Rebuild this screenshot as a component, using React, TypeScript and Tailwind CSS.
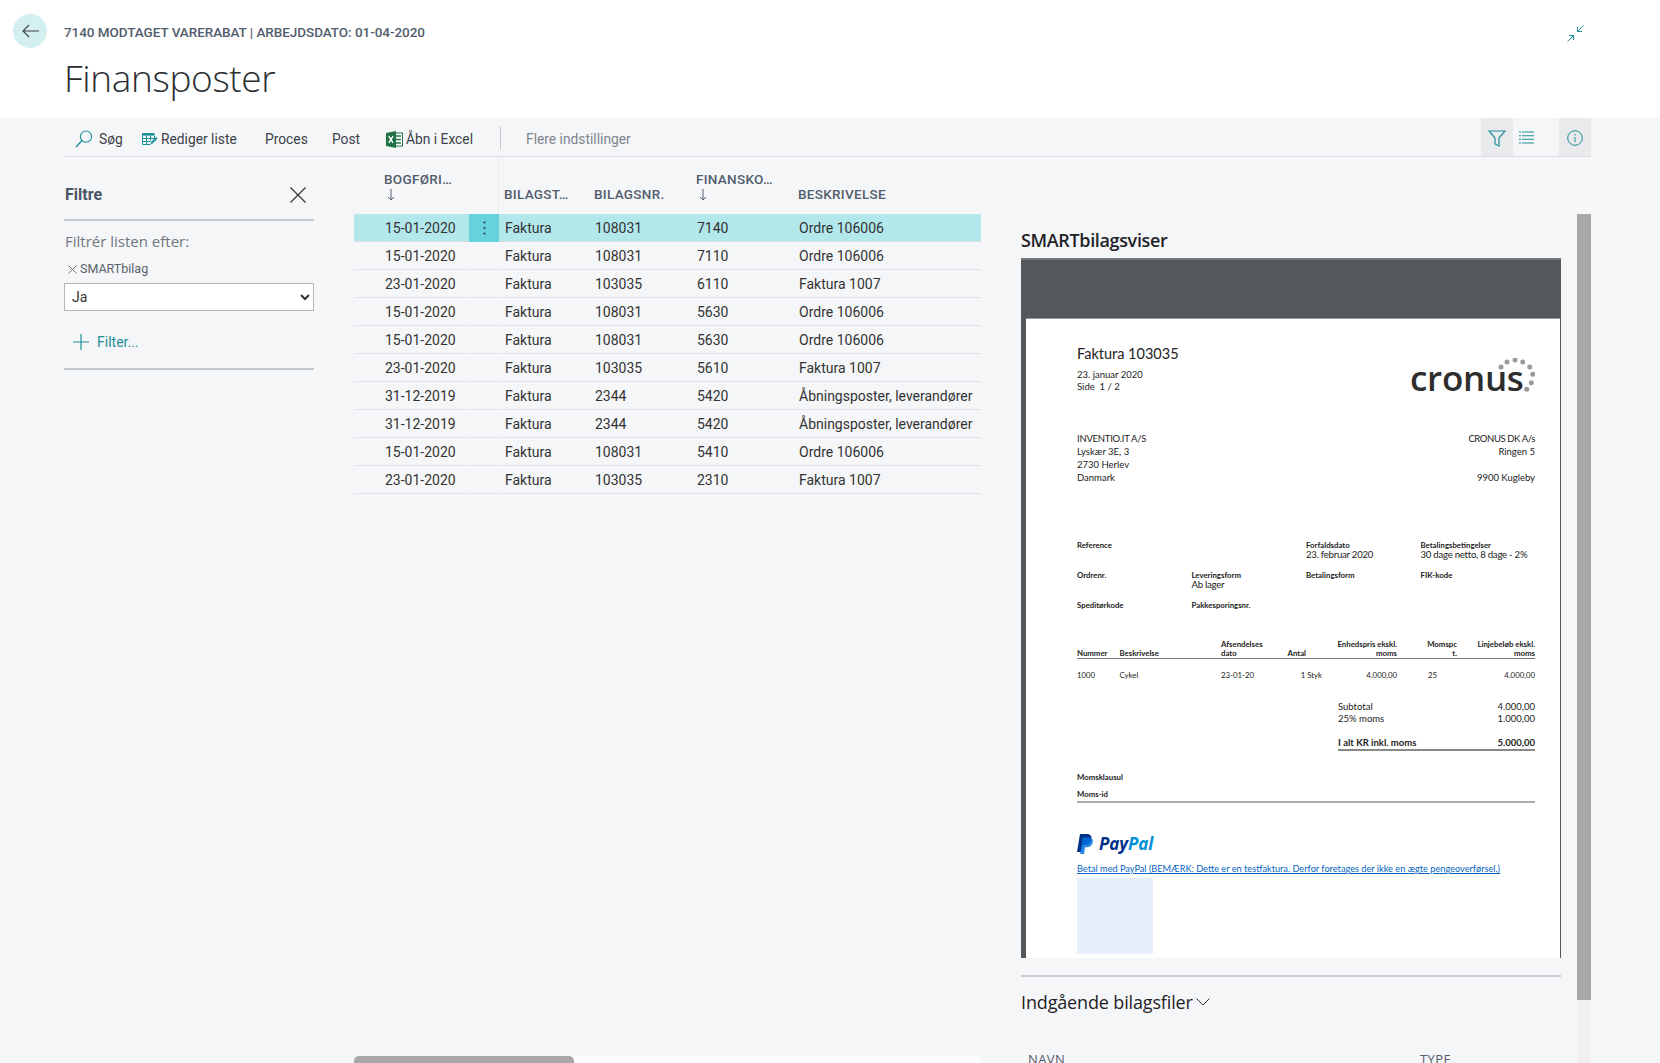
import React from "react";

const rows = [
  ["15-01-2020", "108031", "7140", "Ordre 106006"],
  ["15-01-2020", "108031", "7110", "Ordre 106006"],
  ["23-01-2020", "103035", "6110", "Faktura 1007"],
  ["15-01-2020", "108031", "5630", "Ordre 106006"],
  ["15-01-2020", "108031", "5630", "Ordre 106006"],
  ["23-01-2020", "103035", "5610", "Faktura 1007"],
  ["31-12-2019", "2344", "5420", "Åbningsposter, leverandører"],
  ["31-12-2019", "2344", "5420", "Åbningsposter, leverandører"],
  ["15-01-2020", "108031", "5410", "Ordre 106006"],
  ["23-01-2020", "103035", "2310", "Faktura 1007"],
];

const teal = "#1f8f99";
const roboto = { fontFamily: "Roboto, sans-serif" };

function Search() {
  return (
    <svg width="18" height="18" viewBox="0 0 18 18" fill="none" stroke={teal} strokeWidth="1.1">
      <circle cx="11" cy="6.6" r="5.6" />
      <path d="M7 10.6 1 17" strokeWidth="1.4" />
    </svg>
  );
}
function EditList() {
  return (
    <svg width="16" height="15" viewBox="0 0 16 15" fill="none">
      <rect x="0.5" y="1" width="12" height="2.6" fill={teal} />
      <path d="M0.5 1v11.5h8M4.5 3.5v9M8.5 3.5v5M12.5 3.5v3M.5 6.5h12M.5 9.5h8" stroke={teal} strokeWidth="1" />
      <path d="M8.5 12.5 9 10l5-5 1.6 1.6-5 5z" fill={teal} />
    </svg>
  );
}
function Excel() {
  return (
    <svg width="17" height="17" viewBox="0 0 17 17">
      <rect x="7" y="2" width="9.5" height="13" fill="#fff" stroke="#217346" />
      <path d="M10 5h5M10 8.5h5M10 12h5" stroke="#217346" strokeWidth="1.6" />
      <path d="M0 2 10 0v17L0 15z" fill="#217346" />
      <path d="M2.8 5.2 7 11.8M7 5.2 2.8 11.8" stroke="#fff" strokeWidth="1.4" />
    </svg>
  );
}

function Toolbar() {
  return (
    <div className="ml-[64px] flex h-[39px] w-[1527px] items-center border-b border-[#dcdfe3] text-[13.8px] text-[#3d4248]" style={roboto}>
      <div className="mt-[4px] flex items-center">
        <span className="ml-[11px] flex h-[18px] items-center">
          <Search />
        </span>
        <span className="ml-[6px] w-[43px]">Søg</span>
        <EditList />
        <span className="ml-[3px] w-[104px]">Rediger liste</span>
        <span className="w-[67px]">Proces</span>
        <span className="w-[54px]">Post</span>
        <Excel />
        <span className="ml-[3px] w-[94px]">Åbn i Excel</span>
        <span className="mt-[-4px] h-[23px] w-px bg-[#c6cace]" />
        <span className="ml-[25px] text-[#7f858d]">Flere indstillinger</span>
      </div>
      <span className="ml-auto flex h-[38px] w-[32px] items-center justify-center bg-[#e8eaec] pt-[1px]">
        <svg width="18" height="18" viewBox="0 0 18 18" fill="none" stroke={teal} strokeWidth="1.2">
          <path d="M1 2h16l-6 7v8l-4-2V9z" />
        </svg>
      </span>
      <span className="flex w-[27px] items-center justify-center pt-[1px]">
        <svg width="15" height="13" viewBox="0 0 15 13" fill="none" stroke={teal} strokeWidth="1.1">
          <path d="M3 1h12M3 4.7h12M3 8.3h12M3 12h12" />
          <path d="M0 1h2M0 4.7h2M0 8.3h2M0 12h2" />
        </svg>
      </span>
      <span className="ml-[19px] flex h-[38px] w-[32px] items-center justify-center bg-[#e8eaec] pt-[1px]">
        <svg width="16" height="16" viewBox="0 0 16 16" fill="none" stroke={teal} strokeWidth="1">
          <circle cx="8" cy="8" r="7.3" />
          <path d="M8 7v5M8 4v1.4" />
        </svg>
      </span>
    </div>
  );
}

function FilterPane() {
  return (
    <div className="ml-[64px] w-[250px] shrink-0 pt-[26px]">
      <div className="flex h-[24px] items-center justify-between pl-px pr-[8px] text-[16px] font-bold text-[#4b5563]" style={roboto}>
        <span>Filtre</span>
        <svg width="16" height="16" viewBox="0 0 16 16" fill="none" stroke="#333" strokeWidth="1.2">
          <path d="M0.5 0.5 15.500 15.500M15.500 0.500 0.500 15.500" />
        </svg>
      </div>
      <div className="mt-[12px] border-t-2 border-[#c4c8cd]" />
      <div className="ml-px mt-[10px] h-[20px] text-[15px] leading-[20px] text-[#6f7680]">Filtrér listen efter:</div>
      <div className="mt-[10px] flex h-[16px] items-center pl-[4px] text-[12.5px] text-[#5b626b]" style={roboto}>
        <svg width="9" height="9" viewBox="0 0 9 9" fill="none" stroke="#666" strokeWidth="0.9">
          <path d="M0.5 0.5 8.500 8.500M8.500 0.500 0.500 8.500" />
        </svg>
        <span className="ml-[3px]">SMARTbilag</span>
      </div>
      <select
        defaultValue="Ja"
        style={roboto}
        className="mt-[6px] block h-[28px] w-[250px] border border-[#b4b7bb] bg-white pl-[3px] text-[14px] text-[#333]"
      >
        <option>Ja</option>
        <option>Nej</option>
      </select>
      <div className="ml-[9px] mt-[21px] flex h-[20px] items-center text-[14px] text-[#1f8f99]" style={roboto}>
        <svg width="16" height="16" viewBox="0 0 16 16" fill="none" stroke={teal} strokeWidth="1.2">
          <path d="M8 0v16M0 8h16" />
        </svg>
        <span className="ml-[8px]">Filter...</span>
      </div>
      <div className="mt-[16px] border-t-2 border-[#c4c8cd]" />
    </div>
  );
}

function HeadCell({ a, sorted }: { a: string; sorted?: boolean }) {
  return (
    <div className="flex h-[57px] flex-col justify-end pb-[12px] text-[13.5px] leading-[16px] tracking-[0.3px] text-[#525d6d]" style={roboto}>
      <span className="font-medium">{a}</span>
      {sorted && (
        <svg className="mb-px ml-[3px] mt-[2px]" width="8" height="12" viewBox="0 0 8 12" fill="none" stroke="#525d6d">
          <path d="M4 0v11M1 8l3 3 3-3" />
        </svg>
      )}
    </div>
  );
}

const gridCols = "grid-cols-[115px_30px_90px_102px_102px_188px]";

function DataTable() {
  return (
    <div className="ml-[40px] flex h-[906px] w-[627px] shrink-0 flex-col">
      <div className={`grid ${gridCols}`}>
        <div className="pl-[30px]"><HeadCell a="BOGFØRI…" sorted /></div>
        <div className="border-r border-[#eceef0]" />
        <div className="pl-[5px]"><HeadCell a="BILAGST…" /></div>
        <div className="pl-[5px]"><HeadCell a="BILAGSNR." /></div>
        <div className="pl-[5px]"><HeadCell a="FINANSKO…" sorted /></div>
        <div className="pl-[5px]"><HeadCell a="BESKRIVELSE" /></div>
      </div>
      {rows.map((r, i) => {
        const sel = i === 0;
        const cell = `flex h-[28px] items-center pl-[6px] pt-[2px] border-b ${sel ? "border-[#d8dce0]" : "border-[#dfe2e8]"}`;
        return (
          <div
            key={i}
            style={roboto}
            className={`grid ${gridCols} text-[14px] text-[#333] ${sel ? "bg-[#b2e7ec]" : ""}`}
          >
            <div className={`${cell} pl-[31px]`}>{r[0]}</div>
            {sel ? (
              <div className="flex h-[28px] items-center justify-center bg-[#66d2dc]">
                <svg width="3" height="14" viewBox="0 0 3 14" fill="#2b3a3f">
                  <circle cx="1.5" cy="1.5" r="1.1" />
                  <circle cx="1.5" cy="7" r="1.1" />
                  <circle cx="1.5" cy="12.5" r="1.1" />
                </svg>
              </div>
            ) : (
              <div className={`${cell} mx-px`} />
            )}
            <div className={cell}>Faktura</div>
            <div className={cell}>{r[1]}</div>
            <div className={cell}>{r[2]}</div>
            <div className={`${cell} whitespace-nowrap`}>{r[3]}</div>
          </div>
        );
      })}
      <div className="mt-auto h-[7px] rounded-t-[5px] bg-white">
        <div className="h-[7px] w-[220px] rounded-t-[5px] bg-[#a8a8a8]" />
      </div>
    </div>
  );
}

function Label({ children, className = "" }: { children?: React.ReactNode; className?: string }) {
  return <div className={`h-[10px] text-[7.8px] font-bold leading-[10px] ${className}`}>{children}</div>;
}
function Value({ children }: { children: React.ReactNode }) {
  return <div className="h-[10px] whitespace-nowrap text-[9.6px] leading-[10px] tracking-[-0.25px]">{children}</div>;
}

const invCols = "grid-cols-[42.5px_101.5px_66.5px_34.5px_75px_60px_78px]";

function CronusLogo() {
  const dots = [[4, 9], [10, 4], [18, 2], [25.7, 4], [32.7, 9], [35.7, 16.3], [34.3, 24.7], [29.7, 31.3]];
  return (
    <div className="relative mt-[14px] h-[40px] w-[125px]">
      <span
        className="absolute bottom-[-7px] left-0 text-[35px] font-semibold leading-[40px] tracking-[-0.3px] text-[#2e2e2e]"
        style={{ fontFamily: '"Open Sans", sans-serif' }}
      >
        cronus
      </span>
      <svg className="absolute right-0 top-[7px]" width="38" height="36" viewBox="0 0 38 36" fill="#9a9a9a">
        {dots.map((d, i) => (
          <circle key={i} cx={d[0]} cy={d[1]} r="2.5" />
        ))}
      </svg>
    </div>
  );
}

function PayPalLogo() {
  return (
    <div className="mt-[31px] flex h-[20px] items-center">
      <svg width="16" height="20" viewBox="0 0 16 20">
        <path d="M3 0h6.5C13 0 15 2 14.5 5c-.5 4-3.500 6-7 6H5.300L4 18H0z" fill="#003087" />
        <path d="M5.500 3.500h6c3 0 4.800 1.700 4.300 4.500-.5 3.500-3 5.200-6 5.200H8L7 20H3.200z" fill="#0070e0" fillOpacity="0.85" />
      </svg>
      <span className="ml-[6px] text-[17px] font-bold italic leading-[20px] tracking-[-0.1px]" style={{ fontFamily: '"Open Sans", sans-serif' }}>
        <span className="text-[#003087]">Pay</span>
        <span className="text-[#0090d8]">Pal</span>
      </span>
    </div>
  );
}

function Invoice() {
  return (
    <div className="flex h-[700px] flex-col overflow-hidden border-t-2 border-[#77797b] bg-[#55585b] pl-[5px] pr-px">
      <div className="h-[58px] shrink-0" />
      <div
        className="h-[640px] overflow-hidden border-t border-[#9a9c9e] bg-white pl-[51px] pr-[25px] text-[#222]"
        style={{ fontFamily: "Lato, sans-serif" }}
      >
        <div className="flex h-[74px] justify-between">
          <div className="pt-[26px]">
            <div className="h-[18px] text-[14.5px] leading-[18px]">Faktura 103035</div>
            <div className="mt-[6px] h-[12px] text-[9.5px] leading-[12px]">23. januar 2020</div>
            <div className="h-[12px] text-[9.5px] leading-[12px]">Side&nbsp; 1 / 2</div>
          </div>
          <div className="pt-[18px]"><CronusLogo /></div>
        </div>
        <div className="mt-[39px] flex h-[52px] justify-between text-[9.5px] leading-[13px]">
          <div>
            <div className="tracking-[-0.25px]">INVENTIO.IT A/S</div>
            <div>Lyskær 3E, 3</div>
            <div>2730 Herlev</div>
            <div>Danmark</div>
          </div>
          <div className="text-right">
            <div className="tracking-[-0.4px]">CRONUS DK A/s</div>
            <div>Ringen 5</div>
            <div>&nbsp;</div>
            <div>9900 Kugleby</div>
          </div>
        </div>
        <div className="mt-[56px] grid grid-cols-4">
          <div><Label>Reference</Label></div>
          <div />
          <div><Label>Forfaldsdato</Label><Value>23. februar 2020</Value></div>
          <div><Label>Betalingsbetingelser</Label><Value>30 dage netto, 8 dage - 2%</Value></div>
        </div>
        <div className="mt-[10px] grid h-[20px] grid-cols-4">
          <div><Label>Ordrenr.</Label></div>
          <div><Label>Leveringsform</Label><Value>Ab lager</Value></div>
          <div><Label>Betalingsform</Label></div>
          <div><Label>FIK-kode</Label></div>
        </div>
        <div className="mt-[10px] grid grid-cols-4">
          <div><Label>Speditørkode</Label></div>
          <div><Label>Pakkesporingsnr.</Label></div>
        </div>
        <div className={`mt-[30px] grid items-end border-b-[1.5px] border-[#777] ${invCols} text-[7.8px] font-bold leading-[9px]`}>
          <div>Nummer</div>
          <div>Beskrivelse</div>
          <div>Afsendelses<br />dato</div>
          <div>Antal</div>
          <div className="text-right">Enhedspris ekskl.<br />moms</div>
          <div className="text-right">Momspc<br />t.</div>
          <div className="text-right">Linjebeløb ekskl.<br />moms</div>
        </div>
        <div className={`mt-[10px] grid h-[12px] ${invCols} text-[7.8px] leading-[12px]`}>
          <div>1000</div>
          <div>Cykel</div>
          <div>23-01-20</div>
          <div className="whitespace-nowrap text-right">1 Styk</div>
          <div className="text-right">4.000,00</div>
          <div className="pl-[31px]">25</div>
          <div className="text-right">4.000,00</div>
        </div>
        <div className="ml-[261px] mt-[20px] text-[9.5px] leading-[12px]">
          <div className="flex justify-between"><span>Subtotal</span><span>4.000,00</span></div>
          <div className="flex justify-between"><span>25% moms</span><span>1.000,00</span></div>
          <div className="mt-[12px] flex justify-between border-b-2 border-[#888] font-bold"><span>I alt KR inkl. moms</span><span>5.000,00</span></div>
        </div>
        <Label className="mt-[21px]">Momsklausul</Label>
        <Label className="mt-[7px]">Moms-id</Label>
        <div className="mt-[2px] border-b-2 border-[#aaa]" />
        <PayPalLogo />
        <div className="mt-[9px] h-[12px] whitespace-nowrap text-[9.2px] leading-[12px] text-[#0563c1] underline">
          Betal med PayPal (BEMÆRK: Dette er en testfaktura. Derfor foretages der ikke en ægte pengeoverførsel.)
        </div>
        <div className="mt-[3px] h-[76px] w-[76px] bg-[#e8effc]" />
      </div>
    </div>
  );
}

function RightPanel() {
  return (
    <div className="ml-[40px] w-[540px] shrink-0 pt-[71px] text-[#1f2226]">
      <div className="h-[24px] text-[18px] font-semibold leading-[24px] tracking-[-0.35px]">SMARTbilagsviser</div>
      <div className="mt-[6px]"><Invoice /></div>
      <div className="mt-[17px] border-t-2 border-[#c8ccd2]" />
      <div className="mt-[13px] flex h-[24px] items-center text-[18px] font-medium leading-[24px] tracking-[-0.15px]">
        <span>Indgående bilagsfiler</span>
        <svg className="ml-[3px]" width="14" height="8" viewBox="0 0 14 8" fill="none" stroke="#333" strokeWidth="1">
          <path d="M0.500 0.500 7 7l6.500-6.500" />
        </svg>
      </div>
      <div className="mt-[37px] flex h-[16px] text-[13px] leading-[16px] tracking-[0.4px] text-[#525d6d]">
        <span className="ml-[7px] w-[392px]">NAVN</span>
        <span>TYPE</span>
      </div>
    </div>
  );
}

export default function App() {
  return (
    <div className="h-[1063px] w-[1660px] overflow-hidden bg-[#f5f6f8]" style={{ fontFamily: '"Open Sans", "Noto Sans", sans-serif' }}>
      <div className="h-[118px] bg-white">
        <div className="flex items-start pt-[14px]">
          <div className="ml-[13px] flex h-[34px] w-[34px] items-center justify-center rounded-full bg-[#d4eff0]">
            <svg width="17" height="14" viewBox="0 0 17 14" fill="none" stroke="#3a3f44" strokeWidth="1.1">
              <path d="M17 7H1M7 1 1 7l6 6" />
            </svg>
          </div>
          <div className="ml-[17px] mt-[9px] text-[13.5px] font-medium leading-[18px] tracking-[-0.05px] text-[#525d6d]" style={roboto}>
            7140 MODTAGET VARERABAT | ARBEJDSDATO: 01-04-2020
          </div>
          <svg className="ml-auto mr-[76px] mt-[11px]" width="17" height="17" viewBox="0 0 17 17" fill="none" stroke={teal} strokeWidth="1">
            <path d="M16.500 0.500 10.500 6.500M10.500 2v4.500H15M.5 16.500l6-6M2 10.500h4.500V15" />
          </svg>
        </div>
        <div className="ml-[64px] mt-[7px] text-[37px] font-light leading-[46px] tracking-[-0.35px] text-[#2a2e33]">Finansposter</div>
      </div>
      <Toolbar />
      <div className="flex">
        <FilterPane />
        <DataTable />
        <RightPanel />
        <div className="ml-[16px] mt-[57px] flex h-[849px] w-[14px] shrink-0 flex-col bg-[#f0f0f0]">
          <div className="h-[786px] bg-[#a8a8a8]" />
        </div>
      </div>
    </div>
  );
}
